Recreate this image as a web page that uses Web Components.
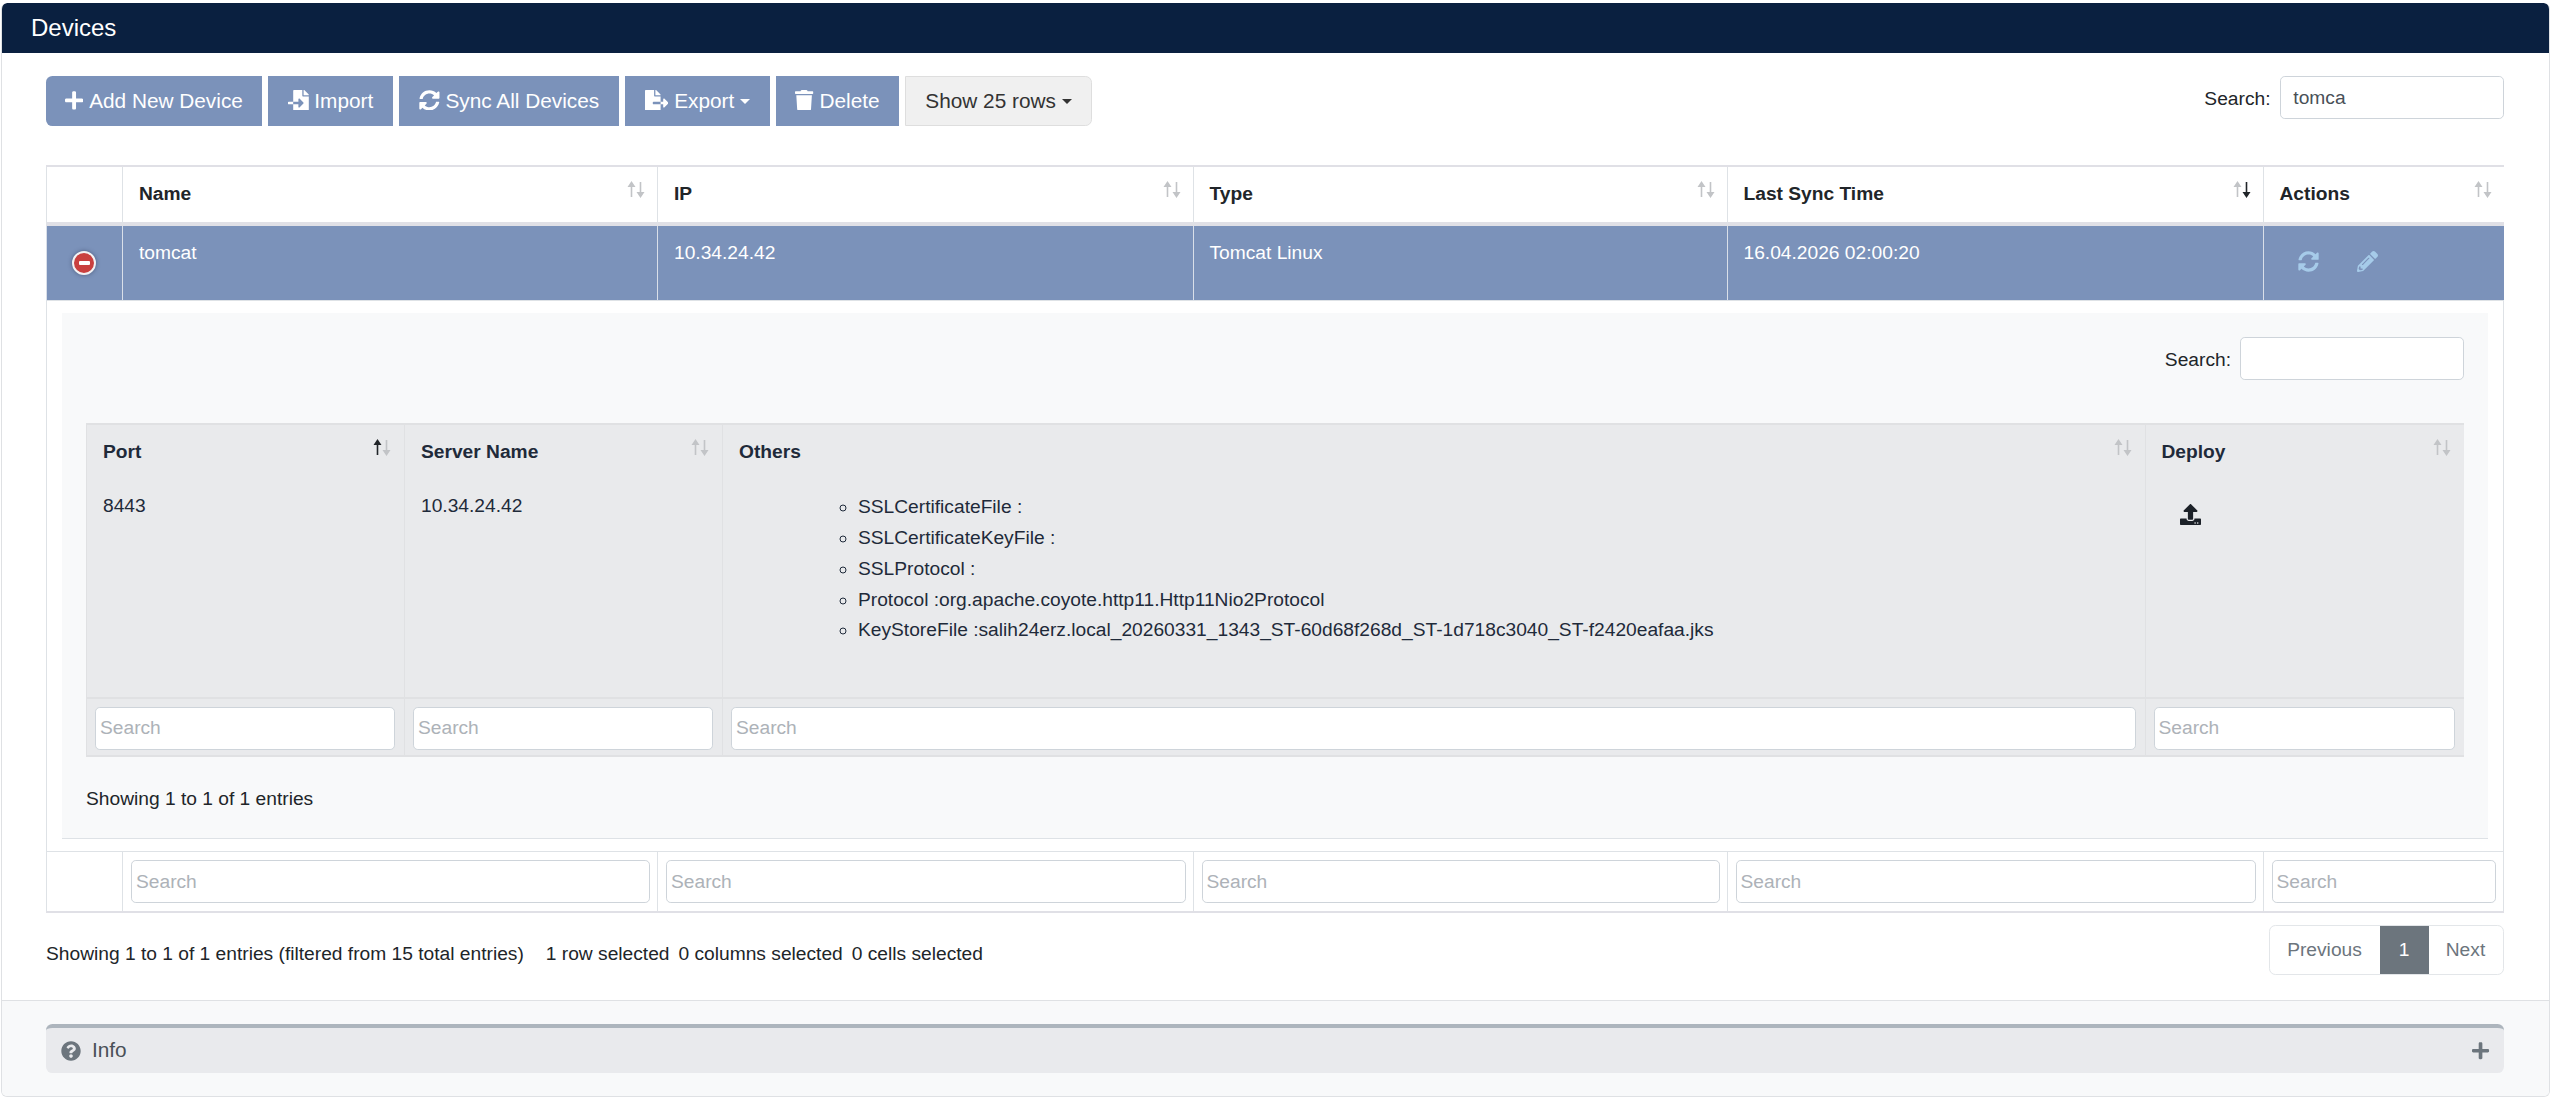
<!DOCTYPE html>
<html lang="en">
<head>
<meta charset="utf-8">
<title>Devices</title>
<style>
  html, body { margin: 0; background: #fff; }
  body { padding: 3px 6px 0 1px; font: 19.2px/28.8px "Liberation Sans", Arial, sans-serif; color: #212529; }
</style>
</head>
<body>
<app-card heading="Devices">
  <tool-bar>
    <tool-button icon="plus" first style="width:216px">Add New Device</tool-button>
    <tool-button icon="file-import" style="width:125px">Import</tool-button>
    <tool-button icon="sync" style="width:220px">Sync All Devices</tool-button>
    <tool-button icon="file-export" caret style="width:145px">Export</tool-button>
    <tool-button icon="trash" style="width:123px">Delete</tool-button>
    <tool-button light caret style="width:187px">Show 25 rows</tool-button>
    <search-field slot="end" value="tomca"></search-field>
  </tool-bar>

  <data-grid columns="76px 535px 535.5px 534px 536px 241.5px">
    <grid-cell kind="head"></grid-cell>
    <grid-cell kind="head">Name<sort-arrows slot="end"></sort-arrows></grid-cell>
    <grid-cell kind="head">IP<sort-arrows slot="end"></sort-arrows></grid-cell>
    <grid-cell kind="head">Type<sort-arrows slot="end"></sort-arrows></grid-cell>
    <grid-cell kind="head">Last Sync Time<sort-arrows slot="end" active="down"></sort-arrows></grid-cell>
    <grid-cell kind="head">Actions<sort-arrows slot="end"></sort-arrows></grid-cell>

    <grid-cell kind="selected"><row-toggle></row-toggle></grid-cell>
    <grid-cell kind="selected">tomcat</grid-cell>
    <grid-cell kind="selected">10.34.24.42</grid-cell>
    <grid-cell kind="selected">Tomcat Linux</grid-cell>
    <grid-cell kind="selected">16.04.2026 02:00:20</grid-cell>
    <grid-cell kind="selected"><row-actions></row-actions></grid-cell>

    <grid-cell kind="detail">
      <detail-panel>
        <search-field slot="search"></search-field>
        <data-grid columns="318px 318px 1422.5px 319.5px" tone="gray">
          <grid-cell kind="head" tone="gray">Port<sort-arrows slot="end" active="up"></sort-arrows></grid-cell>
          <grid-cell kind="head" tone="gray">Server Name<sort-arrows slot="end"></sort-arrows></grid-cell>
          <grid-cell kind="head" tone="gray">Others<sort-arrows slot="end"></sort-arrows></grid-cell>
          <grid-cell kind="head" tone="gray">Deploy<sort-arrows slot="end"></sort-arrows></grid-cell>

          <grid-cell kind="body" tone="gray">8443</grid-cell>
          <grid-cell kind="body" tone="gray">10.34.24.42</grid-cell>
          <grid-cell kind="body" tone="gray">
            <prop-list>
              <li>SSLCertificateFile :</li>
              <li>SSLCertificateKeyFile :</li>
              <li>SSLProtocol :</li>
              <li>Protocol :org.apache.coyote.http11.Http11Nio2Protocol</li>
              <li>KeyStoreFile :salih24erz.local_20260331_1343_ST-60d68f268d_ST-1d718c3040_ST-f2420eafaa.jks</li>
            </prop-list>
          </grid-cell>
          <grid-cell kind="body" tone="gray"><deploy-button></deploy-button></grid-cell>

          <grid-cell kind="filter" tone="gray"><filter-input></filter-input></grid-cell>
          <grid-cell kind="filter" tone="gray"><filter-input></filter-input></grid-cell>
          <grid-cell kind="filter" tone="gray"><filter-input></filter-input></grid-cell>
          <grid-cell kind="filter" tone="gray"><filter-input></filter-input></grid-cell>
        </data-grid>
        <span slot="info">Showing 1 to 1 of 1 entries</span>
      </detail-panel>
    </grid-cell>

    <grid-cell kind="filter"></grid-cell>
    <grid-cell kind="filter"><filter-input></filter-input></grid-cell>
    <grid-cell kind="filter"><filter-input></filter-input></grid-cell>
    <grid-cell kind="filter"><filter-input></filter-input></grid-cell>
    <grid-cell kind="filter"><filter-input></filter-input></grid-cell>
    <grid-cell kind="filter"><filter-input></filter-input></grid-cell>
  </data-grid>

  <table-footer></table-footer>

  <info-box slot="footer">Info</info-box>
</app-card>

<script>
const ICONS = {
  plus: [448, 'M416 208H272V64c0-17.67-14.33-32-32-32h-32c-17.67 0-32 14.33-32 32v144H32c-17.67 0-32 14.33-32 32v32c0 17.67 14.33 32 32 32h144v144c0 17.67 14.33 32 32 32h32c17.67 0 32-14.33 32-32V304h144c17.67 0 32-14.33 32-32v-32c0-17.67-14.33-32-32-32z'],
  sync: [512, 'M370.72 133.28C339.458 104.008 298.888 87.962 255.848 88c-77.458.068-144.328 53.178-162.791 126.85-1.344 5.363-6.122 9.15-11.651 9.15H24.103c-7.498 0-13.194-6.807-11.807-14.176C33.933 94.924 134.813 8 256 8c66.448 0 126.791 26.136 171.315 68.685L463.03 40.97C478.149 25.851 504 36.559 504 57.941V192c0 13.255-10.745 24-24 24H345.941c-21.382 0-32.09-25.851-16.971-40.971l41.75-41.749zM32 296h134.059c21.382 0 32.09 25.851 16.971 40.971l-41.75 41.75c31.262 29.273 71.835 45.319 114.876 45.28 77.418-.07 144.315-53.144 162.787-126.849 1.344-5.363 6.122-9.15 11.651-9.15h57.304c7.498 0 13.194 6.807 11.807 14.176C478.067 417.076 377.187 504 256 504c-66.448 0-126.791-26.136-171.315-68.685L48.97 471.03C33.851 486.149 8 475.441 8 454.059V320c0-13.255 10.745-24 24-24z'],
  trash: [448, 'M432 32H312l-9.4-18.7A24 24 0 0 0 281.1 0H166.8a23.72 23.72 0 0 0-21.4 13.3L136 32H16A16 16 0 0 0 0 48v32a16 16 0 0 0 16 16h416a16 16 0 0 0 16-16V48a16 16 0 0 0-16-16zM53.2 467a48 48 0 0 0 47.9 45h245.8a48 48 0 0 0 47.9-45L416 128H32z'],
  'file-import': [512, 'M16 288c-8.8 0-16 7.2-16 16v32c0 8.8 7.2 16 16 16h112v-64zm489-183L407.1 7c-4.5-4.5-10.6-7-17-7H384v128h128v-6.1c0-6.3-2.5-12.4-7-16.9zm-153 31V0H152c-13.3 0-24 10.7-24 24v264h128v-65.2c0-14.3 17.3-21.4 27.4-11.3L379 308c6.6 6.7 6.6 17.4 0 24l-95.7 96.4c-10.1 10.1-27.4 3-27.4-11.3V352H128v136c0 13.3 10.7 24 24 24h336c13.3 0 24-10.7 24-24V160H376c-13.2 0-24-10.8-24-24z'],
  'file-export': [576, 'M384 121.9c0-6.3-2.5-12.4-7-16.9L279.1 7c-4.5-4.5-10.6-7-17-7H256v128h128zM571 308l-95.7-96.4c-10.1-10.1-27.4-3-27.4 11.3V288h-64v64h64v65.2c0 14.3 17.3 21.4 27.4 11.3L571 332c6.6-6.7 6.6-17.4 0-24zm-379 28v-32c0-8.8 7.2-16 16-16h176V160H248c-13.2 0-24-10.8-24-24V0H24C10.7 0 0 10.7 0 24v464c0 13.3 10.7 24 24 24h336c13.3 0 24-10.7 24-24V352H208c-8.8 0-16-7.2-16-16z'],
  pencil: [512, 'M497.9 142.1l-46.1 46.1c-4.7 4.7-12.3 4.7-17 0l-111-111c-4.7-4.7-4.7-12.3 0-17l46.1-46.1c18.7-18.7 49.1-18.7 67.9 0l60.1 60.1c18.8 18.7 18.8 49.1 0 67.9zM284.2 99.8L21.6 362.4.4 483.9c-2.9 16.4 11.4 30.6 27.8 27.8l121.5-21.3 262.6-262.6c4.7-4.7 4.7-12.3 0-17l-111-111c-4.8-4.7-12.4-4.7-17.1 0zM124.1 339.9c-5.5-5.5-5.5-14.3 0-19.8l154-154c5.5-5.5 14.3-5.5 19.8 0s5.5 14.3 0 19.8l-154 154c-5.5 5.5-14.3 5.5-19.8 0zM88 424h48v36.3l-64.5 11.3-31.1-31.1L51.7 376H88v48z'],
  question: [512, 'M504 256c0 136.997-111.043 248-248 248S8 392.997 8 256C8 119.083 119.043 8 256 8s248 111.083 248 248zM262.655 90c-54.497 0-89.255 22.957-116.549 63.758-3.536 5.286-2.353 12.415 2.715 16.258l34.699 26.31c5.205 3.947 12.621 3.008 16.665-2.122 17.864-22.658 30.113-35.797 57.303-35.797 20.429 0 45.698 13.148 45.698 32.958 0 14.976-12.363 22.667-32.534 33.976C247.128 238.528 216 254.941 216 296v4c0 6.627 5.373 12 12 12h56c6.627 0 12-5.373 12-12v-1.333c0-28.462 83.186-29.647 83.186-106.667 0-58.002-60.165-102-116.531-102zM256 338c-25.365 0-46 20.635-46 46 0 25.364 20.635 46 46 46s46-20.636 46-46c0-25.365-20.635-46-46-46z'],
  upload: [512, 'M296 384h-80c-13.3 0-24-10.7-24-24V192h-87.7c-17.8 0-26.7-21.5-14.1-34.1L242.3 5.7c7.5-7.5 19.8-7.5 27.3 0l152.2 152.2c12.6 12.6 3.7 34.1-14.1 34.1H320v168c0 13.3-10.7 24-24 24zm216-8v112c0 13.3-10.7 24-24 24H24c-13.3 0-24-10.7-24-24V376c0-13.3 10.7-24 24-24h136v8c0 30.9 25.1 56 56 56h80c30.9 0 56-25.1 56-56v-8h136c13.3 0 24 10.7 24 24zm-124 88c0-11-9-20-20-20s-20 9-20 20 9 20 20 20 20-9 20-20zm64 0c0-11-9-20-20-20s-20 9-20 20 9 20 20 20 20-9 20-20z']
};

class Shadowed extends HTMLElement {
  constructor() {
    super();
    this.attachShadow({ mode: 'open' });
  }
  render(html) {
    this.shadowRoot.innerHTML = html;
  }
}

class FaIcon extends Shadowed {
  connectedCallback() {
    const [w, d] = ICONS[this.getAttribute('name')];
    this.render(`
      <style>
        :host { display: inline-flex; font-size: var(--icon-size, 1em); line-height: 1; }
        svg { width: ${w / 512}em; height: 1em; fill: currentColor; display: block; }
      </style>
      <svg viewBox="0 0 ${w} 512"><path d="${d}"/></svg>
    `);
  }
}

class AppCard extends Shadowed {
  connectedCallback() {
    this.render(`
      <style>
        :host { display: flex; flex-direction: column; box-sizing: border-box; height: 1094px; border: 1px solid #dfe1e4; border-top: 0; border-radius: 6px; overflow: hidden; }
        header { height: 50px; background: #0a2040; color: #fff; font-size: 24px; line-height: 50px; padding-left: 30px; margin-left: -1px; margin-right: -1px; border-radius: 6px 6px 0 0; }
        main { flex: 1; padding: 23px 45.5px 25px 44px; display: flex; flex-direction: column; min-height: 0; }
        footer { background: #f8f9fa; border-top: 1px solid #dfe1e4; padding: 23px 45.5px 0 44px; height: 96px; box-sizing: border-box; }
      </style>
      <header>${this.getAttribute('heading')}</header>
      <main><slot></slot></main>
      <footer><slot name="footer"></slot></footer>
    `);
  }
}

class ToolBar extends Shadowed {
  connectedCallback() {
    this.render(`
      <style>
        :host { display: flex; justify-content: space-between; align-items: flex-start; margin-bottom: 39px; }
        .left { display: flex; gap: 6px; }
      </style>
      <div class="left"><slot></slot></div>
      <slot name="end"></slot>
    `);
  }
}

class ToolButton extends Shadowed {
  connectedCallback() {
    const icon = this.getAttribute('icon');
    this.render(`
      <style>
        :host { display: inline-flex; align-items: center; justify-content: center; gap: 5.8px; height: 50px; box-sizing: border-box; background: #7b92ba; color: #fff; font-size: 20.8px; white-space: nowrap; }
        :host([first]) { border-radius: 6.4px 0 0 6.4px; }
        :host([light]) { background: #f0f0f0; color: #333; border: 1px solid #dedede; border-radius: 0 6.4px 6.4px 0; }
        .caret { width: 0; height: 0; border: 5.6px solid transparent; border-top-color: currentColor; border-bottom: 0; }
        fa-icon { margin-top: -2px; }
      </style>
      ${icon ? `<fa-icon name="${icon}"></fa-icon>` : ''}
      <slot></slot>
      ${this.hasAttribute('caret') ? '<span class="caret"></span>' : ''}
    `);
  }
}

class SearchField extends Shadowed {
  connectedCallback() {
    this.render(`
      <style>
        :host { display: flex; align-items: flex-start; gap: 9px; height: 43px; font-size: 19.2px; }
        label { line-height: 46px; height: 43px; }
        input { box-sizing: border-box; width: 224px; height: 43px; border: 1px solid #ced4da; border-radius: 4.8px; padding: 0 12.8px; font: inherit; color: #495057; background: #fff; outline: 0; }
      </style>
      <label>Search:</label>
      <input type="search" value="${this.getAttribute('value') || ''}">
    `);
  }
}

class DataGrid extends Shadowed {
  connectedCallback() {
    const gray = this.getAttribute('tone') === 'gray';
    this.render(`
      <style>
        :host { display: grid; grid-template-columns: ${this.getAttribute('columns')}; border-top: 2px solid ${gray ? '#e0e1e3' : '#e0e0e6'}; border-bottom: 2px solid ${gray ? '#e0e1e3' : '#e0e0e6'}; background: ${gray ? '#e9eaec' : '#fff'}; }
      </style>
      <slot></slot>
    `);
  }
}

class GridCell extends Shadowed {
  connectedCallback() {
    this.render(`
      <style>
        :host { display: flex; justify-content: space-between; align-items: flex-start; box-sizing: border-box; padding: 12.8px 16px; border-left: 1px solid #dee2e6; min-width: 0; }
        :host(:last-child) { border-right: 1px solid #dee2e6; }
        :host([kind=head]) { font-weight: 700; height: 59px; border-bottom: 4px solid #e0e0e6; padding-right: 12px; }
        :host([kind=selected]) { background: #7b92ba; color: #fff; height: 75px; border-left-color: #d9dfe9; border-bottom: 1px solid #dee2e6; }
        :host([kind=selected]:nth-child(7)) { justify-content: center; align-items: center; padding: 0; }
        :host([kind=detail]) { grid-column: 1 / -1; display: block; padding: 12px 15px; border-right: 1px solid #dee2e6; }
        :host([kind=filter]) { padding: 8px 7px 8px 8px; height: 60px; border-top: 1px solid #dee2e6; }
        :host([tone=gray]) { border-left-color: #e0e1e3; color: #1f2a3a; background: #e9eaec; border-right-width: 0; }
        :host([tone=gray][kind=head]) { border-bottom: 0; height: 54.6px; padding-right: 13px; }
        :host([tone=gray][kind=body]) { height: 217.4px; }
        :host([tone=gray][kind=filter]) { border-top: 2px solid #e0e1e3; height: 58px; padding-right: 9px; }
        ::slotted(sort-arrows) { margin: 1.2px 0 0 8px; flex: none; }
      </style>
      <slot></slot>
      <slot name="end"></slot>
    `);
  }
}

class SortArrows extends Shadowed {
  connectedCallback() {
    const active = this.getAttribute('active');
    const up = active === 'up' ? '#212529' : '#c2c4c7';
    const down = active === 'down' ? '#212529' : '#c2c4c7';
    this.render(`
      <style>:host { display: block; width: 18px; height: 17px; } svg { display: block; }</style>
      <svg width="18" height="17" viewBox="0 0 18 17">
        <path fill="${up}" d="M4.5 0L8.5 6H5.3V16H3.7V6H.5z"/>
        <path fill="${down}" d="M13.5 17L9.5 11H12.7V1H14.3V11H17.5z"/>
      </svg>
    `);
  }
}

class RowToggle extends Shadowed {
  connectedCallback() {
    this.render(`
      <style>
        :host { display: flex; align-items: center; justify-content: center; box-sizing: border-box; width: 24px; height: 24px; border-radius: 50%; background: #c9403f; border: 2.5px solid #f2f2f4; box-shadow: 0 0 4px rgba(40,50,80,.55); margin-right: 1px; }
        span { width: 11px; height: 3.5px; background: #fff; border-radius: 1px; }
      </style>
      <span></span>
    `);
  }
}

class RowActions extends Shadowed {
  connectedCallback() {
    this.render(`
      <style>
        :host { display: flex; gap: 38px; padding: 12px 0 0 18px; color: #a6cbe9; --icon-size: 21px; }
      </style>
      <fa-icon name="sync"></fa-icon>
      <fa-icon name="pencil"></fa-icon>
    `);
  }
}

class DeployButton extends Shadowed {
  connectedCallback() {
    this.render(`
      <style>:host { display: block; padding: 12px 0 0 18px; --icon-size: 21px; color: #1c2128; }</style>
      <fa-icon name="upload"></fa-icon>
    `);
  }
}

class PropList extends Shadowed {
  connectedCallback() {
    this.render(`
      <style>
        :host { display: block; padding-left: 119px; }
        ::slotted(li) { line-height: 30.72px; list-style: circle; }
      </style>
      <slot></slot>
    `);
  }
}

class FilterInput extends Shadowed {
  connectedCallback() {
    this.render(`
      <style>
        :host { display: block; flex: 1; min-width: 0; }
        input { display: block; box-sizing: border-box; width: 100%; height: 43px; border: 1px solid #ced4da; border-radius: 4.8px; padding: 0 4px; font: inherit; font-weight: 400; background: #fff; outline: 0; }
        input::placeholder { color: #adb2b8; opacity: 1; }
      </style>
      <input type="text" placeholder="Search">
    `);
  }
}

class DetailPanel extends Shadowed {
  connectedCallback() {
    this.render(`
      <style>
        :host { display: block; box-sizing: border-box; background: #f8f9fa; border-bottom: 1px solid #dee2e6; padding: 24px 24px 0; height: 526px; }
        .search { display: flex; justify-content: flex-end; margin-bottom: 43px; }
        .info { margin-top: 27.6px; }
      </style>
      <div class="search"><slot name="search"></slot></div>
      <slot></slot>
      <div class="info"><slot name="info"></slot></div>
    `);
  }
}

class TableFooter extends Shadowed {
  connectedCallback() {
    this.render(`
      <style>
        :host { display: flex; justify-content: space-between; align-items: flex-start; margin-top: 12px; }
        .info { padding-top: 14.6px; }
        .info span { margin-left: 9px; }
        .info span:first-child { margin-left: 22px; }
        nav { display: flex; height: 50px; line-height: 48px; color: #6c757d; border: 1px solid #e3e6e9; border-radius: 6.4px; box-sizing: border-box; overflow: hidden; background: #fff; }
        nav a { text-align: center; width: 110px; }
        nav a.on { background: #6c757d; color: #fff; margin: -1px 0; width: 49px; line-height: 50px; }
        nav a:last-child { width: 74px; }
      </style>
      <div class="info">Showing 1 to 1 of 1 entries (filtered from 15 total entries)<span>1 row selected</span><span>0 columns selected</span><span>0 cells selected</span></div>
      <nav><a>Previous</a><a class="on">1</a><a>Next</a></nav>
    `);
  }
}

class InfoBox extends Shadowed {
  connectedCallback() {
    this.render(`
      <style>
        :host { display: flex; align-items: center; box-sizing: border-box; height: 49px; background: #e9eaed; border-top: 4px solid #adb5bd; border-radius: 6.4px; padding: 0 14px 0 15px; color: #495057; font-size: 20.8px; }
        .q { color: #6c757d; --icon-size: 20px; margin-right: 11px; }
        .grow { flex: 1; }
        .plus { color: #6c757d; --icon-size: 19.5px; }
      </style>
      <fa-icon class="q" name="question"></fa-icon>
      <span><slot></slot></span>
      <span class="grow"></span>
      <fa-icon class="plus" name="plus"></fa-icon>
    `);
  }
}

customElements.define('fa-icon', FaIcon);
customElements.define('app-card', AppCard);
customElements.define('tool-bar', ToolBar);
customElements.define('tool-button', ToolButton);
customElements.define('search-field', SearchField);
customElements.define('data-grid', DataGrid);
customElements.define('grid-cell', GridCell);
customElements.define('sort-arrows', SortArrows);
customElements.define('row-toggle', RowToggle);
customElements.define('row-actions', RowActions);
customElements.define('deploy-button', DeployButton);
customElements.define('prop-list', PropList);
customElements.define('filter-input', FilterInput);
customElements.define('detail-panel', DetailPanel);
customElements.define('table-footer', TableFooter);
customElements.define('info-box', InfoBox);
</script>
</body>
</html>
